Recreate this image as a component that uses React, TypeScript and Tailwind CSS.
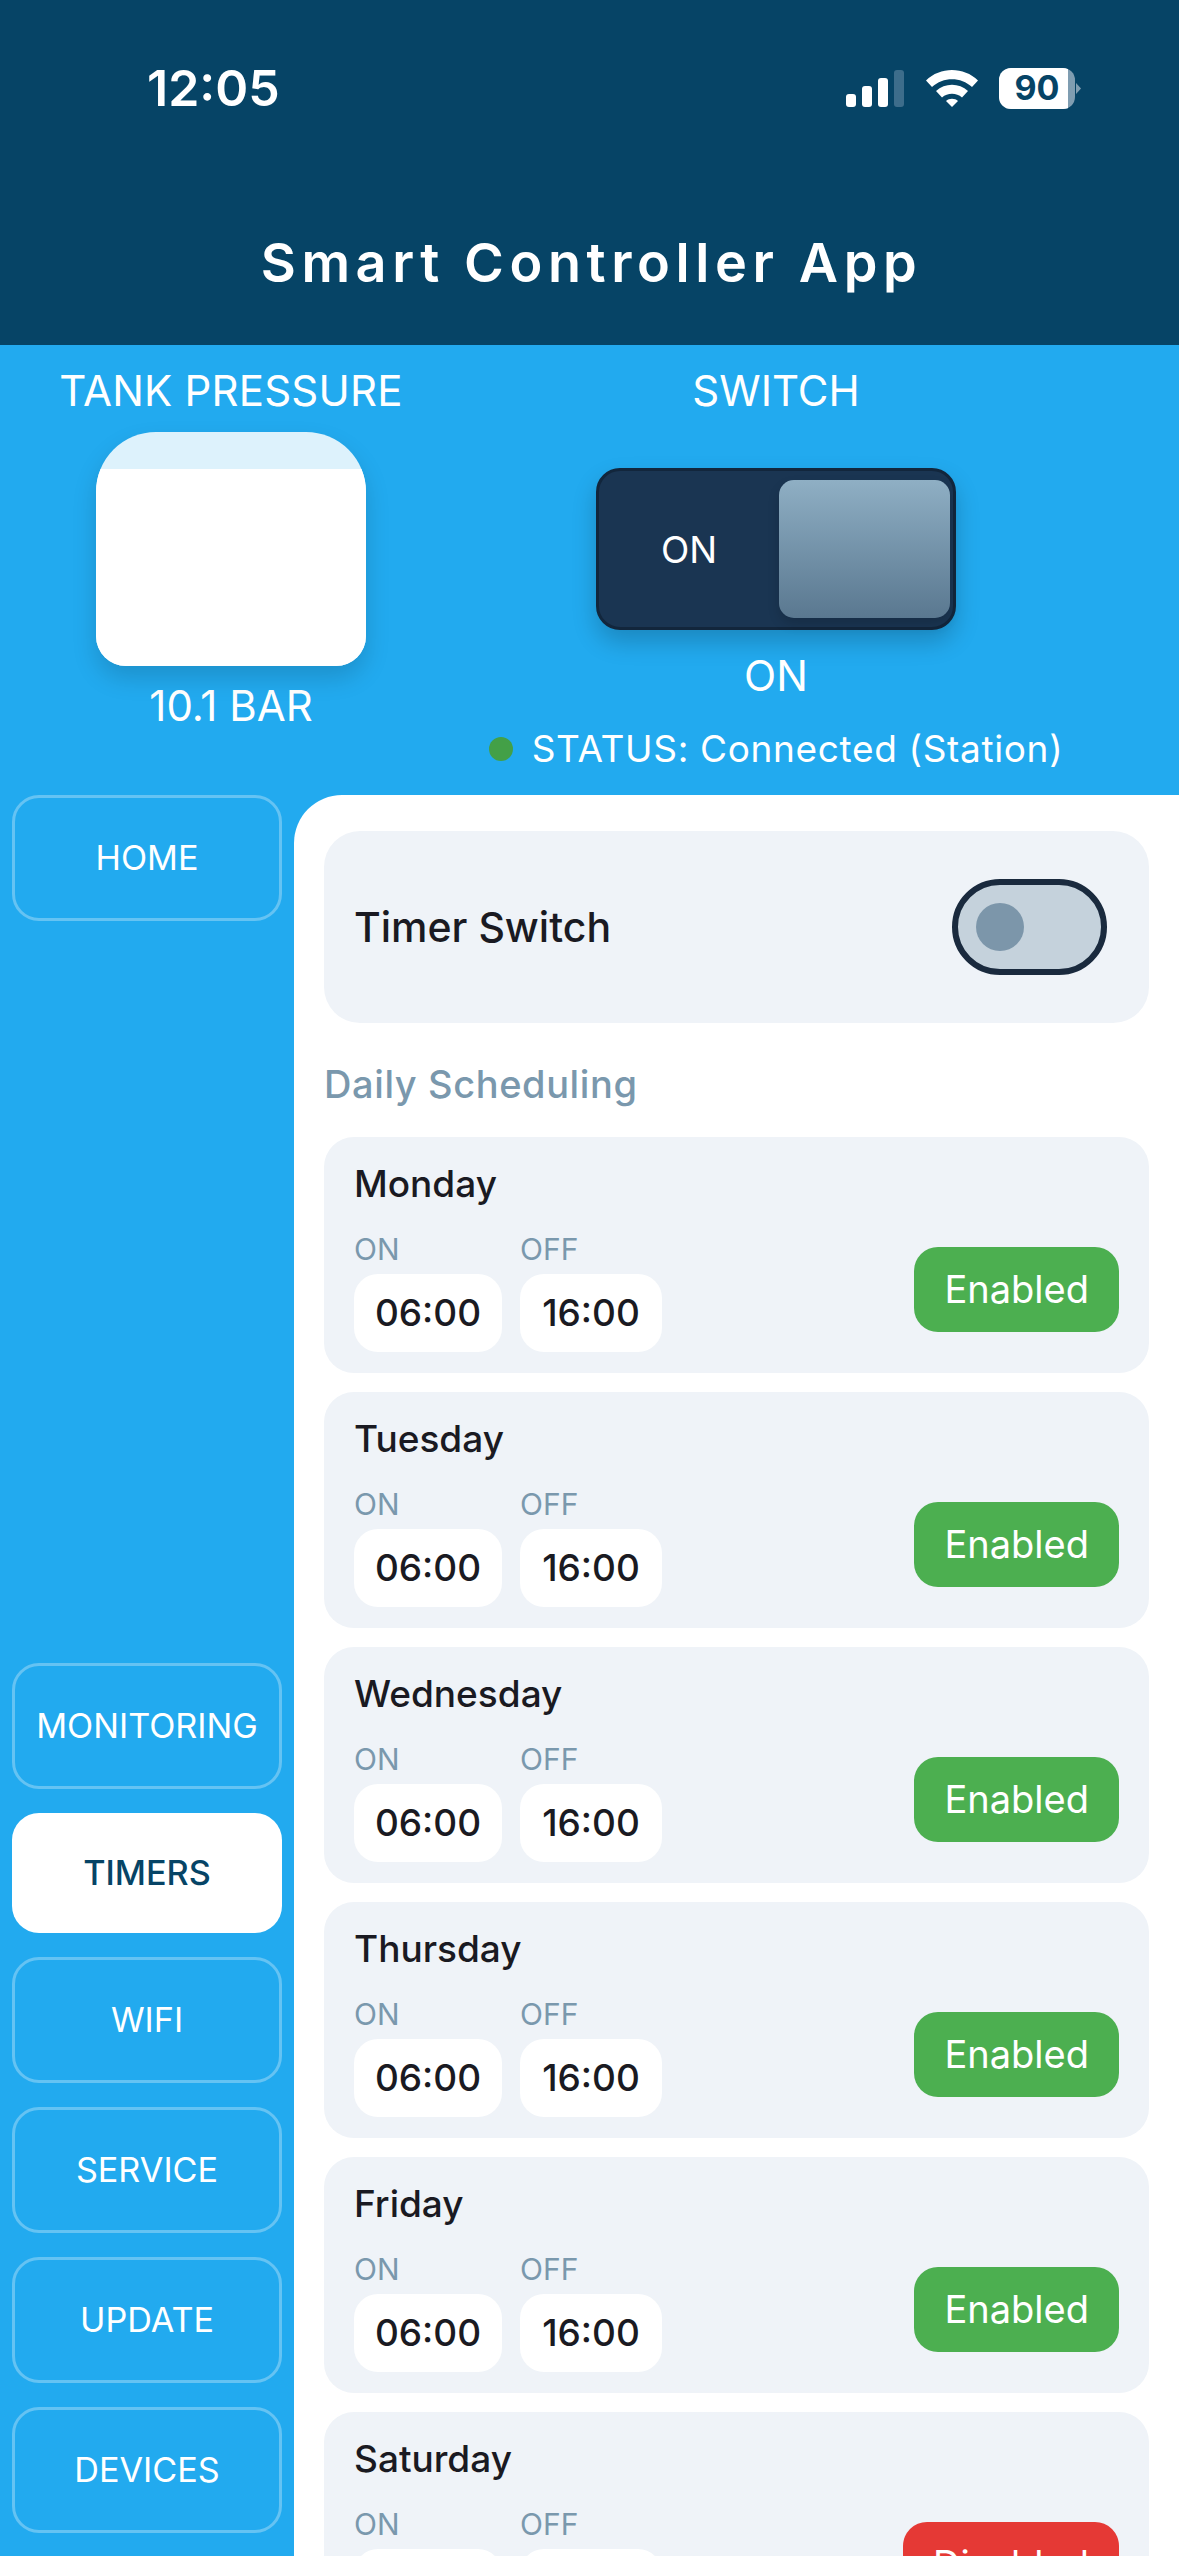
import React from "react";

const font = { fontFamily: "Inter, 'Noto Sans', sans-serif" };

function NavButton({ label, active }: { label: string; active?: boolean }) {
  if (active) {
    return (
      <div className="flex h-[120px] w-[270px] items-center justify-center rounded-[27px] bg-white text-[34.2px] font-medium text-[#064466]">
        {label}
      </div>
    );
  }
  return (
    <div className="flex h-[126px] w-[270px] items-center justify-center rounded-[27px] border-[3px] border-[#65c3f3] text-[34.2px] text-white">
      {label}
    </div>
  );
}

function Day({ name, enabled = true }: { name: string; enabled?: boolean }) {
  return (
    <div className="rounded-[30px] bg-[#eff3f8] px-[30px] pb-[21px] pt-[24px]">
      <div className="text-[37px] font-medium leading-[46px] text-[#1a1a22]">{name}</div>
      <div className="mt-[24px] flex items-end justify-between">
        <div className="flex gap-[18px]">
          <div>
            <div className="text-[30px] leading-[36px] text-[#7a98ad]">ON</div>
            <div className="mt-[7px] flex h-[78px] w-[148px] items-center justify-center rounded-[24px] bg-white text-[37px] font-medium text-[#1a1a22]">06:00</div>
          </div>
          <div>
            <div className="text-[30px] leading-[36px] text-[#7a98ad]">OFF</div>
            <div className="mt-[7px] flex h-[78px] w-[142px] items-center justify-center rounded-[24px] bg-white text-[37px] font-medium text-[#1a1a22]">16:00</div>
          </div>
        </div>
        <div
          className={`mb-[20px] flex h-[85px] items-center rounded-[24px] px-[30px] text-[38px] text-white ${
            enabled ? "bg-[#4caf50]" : "bg-[#e53935]"
          }`}
        >
          {enabled ? "Enabled" : "Disabled"}
        </div>
      </div>
    </div>
  );
}

export default function App() {
  return (
    <div style={font} className="flex h-[2556px] w-[1179px] flex-col overflow-hidden bg-[#22aaef]">
      <header className="h-[345px] shrink-0 bg-[#064466] text-white">
        <div className="flex items-center justify-between pl-[147px] pr-[98px] pt-[58px]">
          <span className="text-[50px] font-semibold leading-[60px]">12:05</span>
          <div className="flex items-center">
            <svg width="58" height="37" viewBox="0 0 58 37" className="mr-[22px]">
              <rect x="0" y="24" width="10" height="13" rx="3" fill="#fff" />
              <rect x="16" y="16" width="10" height="21" rx="3" fill="#fff" />
              <rect x="32" y="8" width="10" height="29" rx="3" fill="#fff" />
              <rect x="48" y="0" width="10" height="37" rx="3" fill="#3d6d8b" />
            </svg>
            <svg width="52" height="37" viewBox="0 0 52 37" className="mr-[21px]">
              <path d="M0 10.5 C14 -3.5 38 -3.5 52 10.5 L46 17 C35 6.5 17 6.5 6 17 Z" fill="#fff" />
              <path d="M10 21 C19 12.5 33 12.5 42 21 L36 27.5 C30.5 22.5 21.5 22.5 16 27.5 Z" fill="#fff" />
              <path d="M20 31 C23 28 29 28 32 31 L26 37 Z" fill="#fff" />
            </svg>
            <div className="relative flex h-[41px] w-[76px] items-center justify-center overflow-hidden rounded-[12px] bg-[#7f9db1]">
              <div className="absolute inset-y-0 left-0 w-[69px] bg-white" />
              <span className="relative text-[34px] font-bold leading-none text-[#064466]">90</span>
            </div>
            <svg width="5" height="11" viewBox="0 0 5 11" className="ml-[1px]">
              <path d="M0 0 L5 5.5 L0 11 Z" fill="#7f9db1" />
            </svg>
          </div>
        </div>
        <h1 className="mt-[113px] pl-[4px] text-center text-[54px] font-semibold leading-[64px] tracking-[5.6px]">Smart Controller App</h1>
      </header>

      <section className="flex h-[450px] shrink-0 text-white">
        <div className="flex w-[462px] flex-col items-center pt-[20px]">
          <div className="text-[42px] leading-[52px] tracking-[0.2px]">TANK PRESSURE</div>
          <div className="relative mt-[15px] h-[234px] w-[270px] overflow-hidden rounded-b-[30px] rounded-t-[60px] bg-[#ddf2fc] shadow-[0_12px_24px_rgba(0,0,0,0.15)]">
            <div className="absolute inset-x-0 bottom-0 h-[197px] bg-white" />
          </div>
          <div className="mt-[14px] text-[42px] leading-[52px]">10.1 BAR</div>
        </div>
        <div className="flex w-[628px] flex-col items-center pt-[20px]">
          <div className="text-[42px] leading-[52px]">SWITCH</div>
          <div className="mt-[51px] flex h-[162px] w-[360px] items-center justify-between rounded-[24px] border-[3px] border-[#12263c] bg-[#1a3552] pr-[3px] shadow-[0_12px_24px_rgba(0,0,0,0.2)]">
            <span className="ml-[62px] text-[37px] leading-none">ON</span>
            <div className="h-[138px] w-[171px] rounded-[15px] bg-gradient-to-b from-[#8fafc4] to-[#5a7890] shadow-[0_6px_12px_rgba(0,0,0,0.15)]" />
          </div>
          <div className="mt-[20px] text-[42px] leading-[52px]">ON</div>
          <div className="mt-[24px] flex items-center gap-[19px]">
            <span className="h-[24px] w-[24px] rounded-full bg-[#43a047]" />
            <span className="text-[37px] leading-[46px] tracking-[0.65px]">STATUS: Connected (Station)</span>
          </div>
        </div>
      </section>

      <div className="flex min-h-0 flex-1">
        <nav className="flex w-[294px] shrink-0 flex-col items-start pb-[23px] pl-[12px]">
          <NavButton label="HOME" />
          <div className="mt-auto flex flex-col gap-[24px]">
            <NavButton label="MONITORING" />
            <NavButton label="TIMERS" active />
            <NavButton label="WIFI" />
            <NavButton label="SERVICE" />
            <NavButton label="UPDATE" />
            <NavButton label="DEVICES" />
          </div>
        </nav>
        <main className="flex-1 overflow-hidden rounded-tl-[48px] bg-white px-[30px] pt-[36px]">
          <div className="flex h-[192px] items-center justify-between rounded-[36px] bg-[#eff3f8] pl-[30px] pr-[42px]">
            <span className="text-[41px] font-medium leading-[60px] text-[#1a1a22]">Timer Switch</span>
            <div className="flex h-[96px] w-[155px] items-center rounded-full border-[6px] border-[#1a2a3e] bg-[#c5d2dc] pl-[18px]">
              <span className="h-[48px] w-[48px] rounded-full bg-[#7c96aa]" />
            </div>
          </div>
          <div className="mt-[38px] text-[38px] font-medium leading-[46px] tracking-[0.6px] text-[#7a98ad]">Daily Scheduling</div>
          <div className="mt-[30px] flex flex-col gap-[19px]">
            <Day name="Monday" />
            <Day name="Tuesday" />
            <Day name="Wednesday" />
            <Day name="Thursday" />
            <Day name="Friday" />
            <Day name="Saturday" enabled={false} />
          </div>
        </main>
      </div>
    </div>
  );
}
